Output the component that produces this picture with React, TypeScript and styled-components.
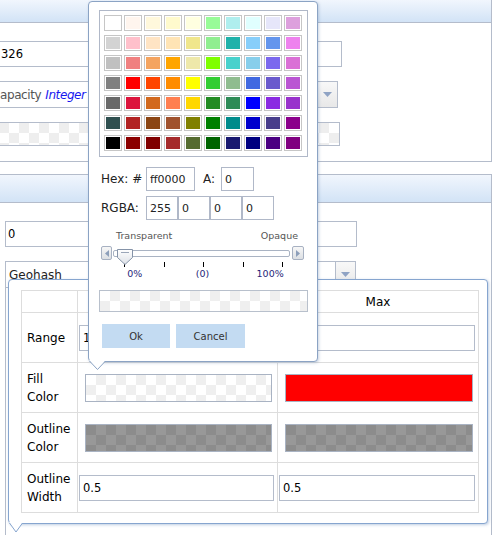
import styled, { createGlobalStyle } from 'styled-components';

const GlobalStyle = createGlobalStyle`
  *, *::before, *::after { box-sizing: border-box; }
  html, body { margin: 0; padding: 0; background: #fff; }
  body {
    font-family: 'DejaVu Sans', Verdana, sans-serif;
    font-size: 12px;
    color: #000;
  }
`;

const palette = [
  ['#ffffff', '#fff5ee', '#fff8dc', '#fffacd', '#ffffe0', '#98fb98', '#afeeee', '#e0ffff', '#e6e6fa', '#dda0dd'],
  ['#d3d3d3', '#ffc0cb', '#ffe4c4', '#ffe4b5', '#f0e68c', '#90ee90', '#20b2aa', '#87cefa', '#6495ed', '#ee82ee'],
  ['#c0c0c0', '#f08080', '#f4a460', '#ffa500', '#eee8aa', '#7fff00', '#48d1cc', '#87ceeb', '#7b68ee', '#da70d6'],
  ['#808080', '#ff0000', '#ff4500', '#ff8c00', '#ffff00', '#32cd32', '#8fbc8f', '#4169e1', '#6a5acd', '#ba55d3'],
  ['#696969', '#dc143c', '#d2691e', '#ff7f50', '#ffd700', '#228b22', '#2e8b57', '#0000ff', '#8a2be2', '#9932cc'],
  ['#2f4f4f', '#b22222', '#8b4513', '#a0522d', '#808000', '#008000', '#008b8b', '#0000cd', '#483d8b', '#8b008b'],
  ['#000000', '#8b0000', '#800000', '#a52a2a', '#556b2f', '#006400', '#191970', '#000080', '#4b0082', '#800080'],
];

const checker = (a: string, b: string) => `
  background: repeating-conic-gradient(${b} 0% 25%, ${a} 0% 50%) 0 0 / 20px 20px;
`;

const Screen = styled.div`
  position: relative;
  width: 498px;
  height: 535px;
  overflow: hidden;
  background: #fff;
`;

/* ---------- background form ---------- */

const Panel = styled.section<{ $first?: boolean }>`
  width: 492px;
  border-right: 1px solid #b4bccb;
  ${(p) =>
    p.$first
      ? 'height: 162px; border-bottom: 1px solid #b4bccb;'
      : 'height: 370px; margin-top: 12px; border-top: 1px solid #b4bccb;'}
`;

const PanelHeader = styled.div<{ $height: number }>`
  height: ${(p) => p.$height}px;
  background: linear-gradient(#f1f6fd, #d2e3f6);
  border-bottom: 1px solid #b4bccb;
`;

const PanelBody = styled.div`
  display: flex;
  flex-direction: column;
  gap: 14px;
  padding-top: 18px;
`;

const TextBox = styled.input<{ $left: number; $width: number; $pad: number }>`
  margin-left: ${(p) => p.$left}px;
  width: ${(p) => p.$width}px;
  height: 26px;
  border: 1px solid #b4bccb;
  padding: 0 0 0 ${(p) => p.$pad}px;
  font: 11.5px 'DejaVu Sans', sans-serif;
  color: #000;
  background: #fff;
  outline: none;
`;

const SelectBox = styled.div<{ $left: number; $width: number }>`
  display: flex;
  margin-left: ${(p) => p.$left}px;
  width: ${(p) => p.$width}px;
  height: 27px;
  border: 1px solid #b4bccb;
  background: #fff;
`;

const SelectText = styled.div<{ $dark?: boolean }>`
  flex: 1;
  display: flex;
  align-items: center;
  padding-left: 3px;
  white-space: nowrap;
  overflow: hidden;
  color: ${(p) => (p.$dark ? '#222' : '#555')};
  letter-spacing: ${(p) => (p.$dark ? 0 : -0.4)}px;
  em {
    color: #1818f0;
    margin-left: 4px;
  }
`;

const ArrowButton = styled.div`
  width: 20px;
  display: flex;
  align-items: center;
  justify-content: center;
  border-left: 1px solid #b4bccb;
  background: linear-gradient(#f8f8f8, #e8e8e8);
`;

const CheckerField = styled.div<{ $left: number; $width: number }>`
  margin-left: ${(p) => p.$left}px;
  width: ${(p) => p.$width}px;
  height: 24px;
  border: 1px solid #b4bccb;
  ${checker('#ffffff', '#eeeeee')}
`;

const ListEdge = styled.div`
  margin: -14px 0 0 5px;
  height: 260px;
  border-left: 1px solid #b4bccb;
`;

/* ---------- range editor popup ---------- */

const RangePopup = styled.div`
  position: absolute;
  left: 8px;
  top: 279px;
  width: 480px;
  height: 245px;
  padding: 10px 0 0 12px;
  background: #fff;
  border: 1px solid #86a5cf;
  border-radius: 4px;
  box-shadow: 1px 1px 3px rgba(110, 145, 190, 0.45);
`;

const RangeGrid = styled.div`
  display: grid;
  grid-template-columns: 55px 199px 200px;
  grid-template-rows: 21px repeat(4, 49px);
  gap: 1px;
  width: 458px;
  background: #dddddd;
  border: 1px solid #dddddd;
`;

const HeadCell = styled.div`
  background: #fff;
  display: flex;
  align-items: center;
  justify-content: center;
  font-size: 12px;
`;

const LabelCell = styled.div`
  background: #fff;
  display: flex;
  align-items: center;
  padding-left: 5px;
  line-height: 18px;
`;

const FieldCell = styled.div<{ $swatch?: boolean }>`
  background: #fff;
  display: flex;
  align-items: center;
  padding: ${(p) => (p.$swatch ? '0 5px 0 7px' : '0 3px 0 1px')};
`;

const CellInput = styled.input`
  width: 100%;
  height: 26px;
  border: 1px solid #b4bccb;
  padding: 0 0 0 3px;
  font: 11.5px 'DejaVu Sans', sans-serif;
  color: #000;
  outline: none;
`;

const ColorBar = styled.div<{ $kind: 'clear' | 'gray' | 'solid'; $color?: string }>`
  width: 100%;
  height: 28px;
  border: 1px solid #a9b3c3;
  ${(p) =>
    p.$kind === 'clear'
      ? checker('#ffffff', '#efefef')
      : p.$kind === 'gray'
        ? checker('#8c8c8c', '#989898')
        : `background: ${p.$color};`}
`;

const Tail = styled.svg`
  position: absolute;
  left: 0;
  top: 100%;
  overflow: visible;
`;

/* ---------- colour picker popup ---------- */

const Picker = styled.div`
  position: absolute;
  left: 88px;
  top: 1px;
  width: 230px;
  height: 361px;
  padding: 8px 0 0 10px;
  background: #fff;
  border: 1px solid #8ba3c4;
  border-radius: 4px;
  box-shadow: 1px 1px 3px rgba(100, 130, 170, 0.35);
`;

const PaletteBox = styled.div`
  width: 209px;
  height: 147px;
  border: 1px solid #b0b8c8;
  padding: 4px 0 0 4px;
  display: grid;
  grid-template-columns: repeat(10, 18px);
  grid-auto-rows: 16px;
  column-gap: 2px;
  row-gap: 4px;
`;

const Swatch = styled.div`
  border: 1px solid #c6c6c6;
  padding: 1px;
  background: #fff;
`;

const SwatchColor = styled.div<{ $color: string }>`
  width: 100%;
  height: 100%;
  background: ${(p) => p.$color};
`;

const PickerRow = styled.div<{ $top: number }>`
  display: flex;
  align-items: center;
  margin-top: ${(p) => p.$top}px;
  padding-left: 2px;
  height: 24px;
`;

const PickerLabel = styled.span<{ $inline?: boolean }>`
  width: ${(p) => (p.$inline ? 18 : 45)}px;
  margin-left: ${(p) => (p.$inline ? 8 : 0)}px;
  color: #222;
  white-space: nowrap;
`;

const PickerInput = styled.input<{ $width: number }>`
  width: ${(p) => p.$width}px;
  height: 24px;
  border: 1px solid #b0b8c8;
  padding: 0 0 0 3px;
  font: 11px 'DejaVu Sans', sans-serif;
  color: #222;
  outline: none;
`;

const SliderCaptions = styled.div`
  display: flex;
  justify-content: space-between;
  width: 205px;
  margin-top: 10px;
  padding: 0 6px 0 17px;
  height: 12px;
  font-size: 9.5px;
  line-height: 12px;
  color: #555;
`;

const SliderBar = styled.div`
  display: flex;
  align-items: center;
  width: 205px;
  height: 14px;
  margin-top: 4px;
  padding-left: 2px;
`;

const SliderButton = styled.div<{ $right?: boolean }>`
  width: ${(p) => (p.$right ? 12 : 11)}px;
  height: 14px;
  margin-left: ${(p) => (p.$right ? 2 : 0)}px;
  display: flex;
  align-items: center;
  justify-content: center;
  border: 1px solid #a7b1c2;
  border-radius: 2px;
  background: linear-gradient(#f7f7f7, #dcdfe3);
`;

const SliderTrack = styled.div`
  position: relative;
  flex: 1;
  height: 7px;
  margin-left: 1px;
  border: 1px solid #a9b3c3;
  border-radius: 2px;
  background: #fff;
`;

const SliderHandle = styled.svg`
  position: absolute;
  left: 3px;
  top: -2px;
`;

const Ticks = styled.div`
  display: flex;
  justify-content: space-between;
  width: 159px;
  height: 5px;
  margin: 2px 0 0 25px;
  span {
    width: 1px;
    background: #000;
  }
`;

const TickLabels = styled.div`
  display: grid;
  grid-template-columns: repeat(3, 1fr);
  width: 203px;
  margin: 1px 0 0 2px;
  font-size: 9.5px;
  line-height: 12px;
  color: #1f1f7a;
  text-align: center;
`;

const Preview = styled.div`
  width: 209px;
  height: 22px;
  margin-top: 10px;
  border: 1px solid #b8c0cc;
  ${checker('#ffffff', '#efefef')}
`;

const ButtonRow = styled.div`
  display: flex;
  gap: 6px;
  margin-top: 12px;
  padding-left: 3px;
`;

const PickerButton = styled.button<{ $wide?: boolean }>`
  width: ${(p) => (p.$wide ? 69 : 68)}px;
  height: 24px;
  border: none;
  background: #c3dbf2;
  font: 10px 'DejaVu Sans', sans-serif;
  color: #333;
  padding: 0;
`;

const DownArrow = () => (
  <svg width="9" height="5" viewBox="0 0 9 5">
    <path d="M0 0H9L4.5 5Z" fill="#8fa3c4" />
  </svg>
);

export default function App() {
  return (
    <Screen>
      <GlobalStyle />

      <Panel $first>
        <PanelHeader $height={23} />
        <PanelBody>
          <TextBox $left={-12} $width={354} $pad={12} defaultValue="326" readOnly />
          <SelectBox $left={-4} $width={342}>
            <SelectText>
              apacity<em>Integer</em>
            </SelectText>
            <ArrowButton>
              <DownArrow />
            </ArrowButton>
          </SelectBox>
          <CheckerField $left={-12} $width={352} />
        </PanelBody>
      </Panel>

      <Panel>
        <PanelHeader $height={28} />
        <PanelBody>
          <TextBox $left={5} $width={352} $pad={2} defaultValue="0" readOnly />
          <SelectBox $left={5} $width={351}>
            <SelectText $dark>Geohash</SelectText>
            <ArrowButton>
              <DownArrow />
            </ArrowButton>
          </SelectBox>
          <ListEdge />
        </PanelBody>
      </Panel>

      <RangePopup>
        <RangeGrid>
          <HeadCell />
          <HeadCell>Min</HeadCell>
          <HeadCell>Max</HeadCell>

          <LabelCell>Range</LabelCell>
          <FieldCell>
            <CellInput defaultValue="1" readOnly />
          </FieldCell>
          <FieldCell>
            <CellInput defaultValue="" readOnly />
          </FieldCell>

          <LabelCell>
            Fill
            <br />
            Color
          </LabelCell>
          <FieldCell $swatch>
            <ColorBar $kind="clear" />
          </FieldCell>
          <FieldCell $swatch>
            <ColorBar $kind="solid" $color="#ff0000" />
          </FieldCell>

          <LabelCell>
            Outline
            <br />
            Color
          </LabelCell>
          <FieldCell $swatch>
            <ColorBar $kind="gray" />
          </FieldCell>
          <FieldCell $swatch>
            <ColorBar $kind="gray" />
          </FieldCell>

          <LabelCell>
            Outline
            <br />
            Width
          </LabelCell>
          <FieldCell>
            <CellInput defaultValue="0.5" readOnly />
          </FieldCell>
          <FieldCell>
            <CellInput defaultValue="0.5" readOnly />
          </FieldCell>
        </RangeGrid>
        <Tail width="14" height="10" viewBox="0 0 14 10">
          <path d="M0 -1L7 9L14 -1Z" fill="#fff" />
          <path d="M0.5 0L7 9L13.5 0" fill="none" stroke="#86a5cf" />
        </Tail>
      </RangePopup>

      <Picker>
        <PaletteBox>
          {palette.flat().map((c, i) => (
            <Swatch key={i}>
              <SwatchColor $color={c} />
            </Swatch>
          ))}
        </PaletteBox>

        <PickerRow $top={10}>
          <PickerLabel>Hex: #</PickerLabel>
          <PickerInput $width={49} defaultValue="ff0000" readOnly />
          <PickerLabel $inline>A:</PickerLabel>
          <PickerInput $width={33} defaultValue="0" readOnly />
        </PickerRow>
        <PickerRow $top={5}>
          <PickerLabel>RGBA:</PickerLabel>
          {['255', '0', '0', '0'].map((v, i) => (
            <PickerInput key={i} $width={32} defaultValue={v} readOnly />
          ))}
        </PickerRow>

        <SliderCaptions>
          <span>Transparent</span>
          <span>Opaque</span>
        </SliderCaptions>
        <SliderBar>
          <SliderButton>
            <svg width="4" height="7" viewBox="0 0 4 7">
              <path d="M4 0V7L0 3.5Z" fill="#8d9fba" />
            </svg>
          </SliderButton>
          <SliderTrack>
            <SliderHandle width="16" height="16" viewBox="0 0 16 16">
              <defs>
                <linearGradient id="hg" x1="0" y1="0" x2="0" y2="1">
                  <stop offset="0" stopColor="#ffffff" />
                  <stop offset="1" stopColor="#dde1e7" />
                </linearGradient>
              </defs>
              <path d="M0.5 0.5H15.5V8.5L8 15.5L0.5 8.5Z" fill="url(#hg)" stroke="#8593a8" />
              <path d="M4 3.5H12" stroke="#9aa6b8" />
            </SliderHandle>
          </SliderTrack>
          <SliderButton $right>
            <svg width="4" height="7" viewBox="0 0 4 7">
              <path d="M0 0V7L4 3.5Z" fill="#8d9fba" />
            </svg>
          </SliderButton>
        </SliderBar>
        <Ticks>
          <span />
          <span />
          <span />
          <span />
          <span />
        </Ticks>
        <TickLabels>
          <span>0%</span>
          <span>(0)</span>
          <span>100%</span>
        </TickLabels>

        <Preview />

        <ButtonRow>
          <PickerButton>Ok</PickerButton>
          <PickerButton $wide>Cancel</PickerButton>
        </ButtonRow>

        <Tail width="17" height="10" viewBox="0 0 17 10">
          <path d="M0 -1L8.5 8.5L17 -1Z" fill="#fff" />
          <path d="M0.5 0L8.5 8.5L16.5 0" fill="none" stroke="#8ba3c4" />
        </Tail>
      </Picker>
    </Screen>
  );
}
